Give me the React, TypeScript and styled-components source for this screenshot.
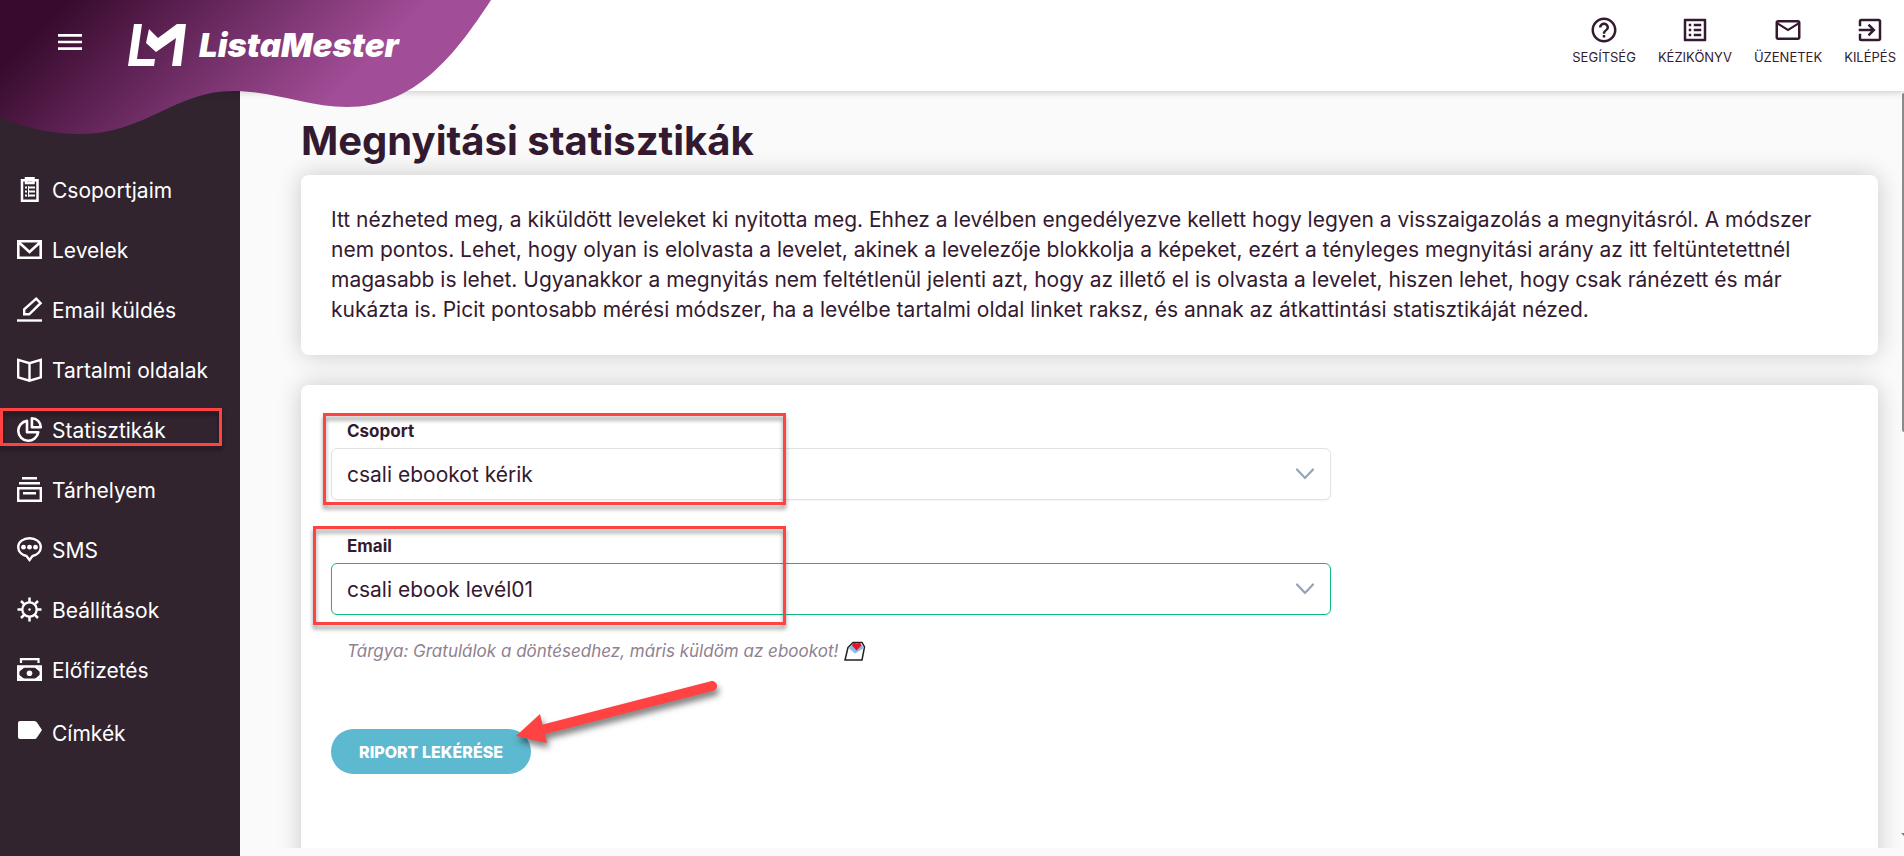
import React from "react";
import styled, { createGlobalStyle } from "styled-components";
import { MdHelpOutline, MdOutlineListAlt, MdMailOutline, MdExitToApp, MdMenu } from "react-icons/md";

const GlobalStyle = createGlobalStyle`
  *, *::before, *::after { box-sizing: border-box; }
  body {
    margin: 0;
    background: #fafafa;
    color: #341a30;
    font-family: Inter, "Open Sans", sans-serif;
    font-size: 21px;
    overflow: hidden;
  }
`;

const Page = styled.div`
  position: relative;
  display: flex;
  flex-direction: column;
  height: 100vh;
`;

const Header = styled.header`
  position: relative;
  z-index: 1;
  display: flex;
  justify-content: space-between;
  flex: 0 0 91px;
  background: #fff;
  box-shadow: 0 0 8px rgba(0, 0, 0, 0.25);
`;

const Wave = styled.svg`
  position: absolute;
  left: 0;
  top: 0;
`;

const Brand = styled.div`
  position: relative;
  display: flex;
  align-items: center;
  height: 84px;
  padding-left: 54px;
`;

const MenuButton = styled.button`
  display: flex;
  padding: 0;
  border: 0;
  background: none;
  color: #fff;
  font-size: 32px;
`;

const LogoLink = styled.a`
  display: flex;
  align-items: center;
  gap: 12px;
  margin-left: 42px;
  padding-top: 6px;
  color: #fff;
  font-size: 33px;
  font-weight: 900;
  font-style: italic;
  line-height: 42px;
  text-decoration: none;
`;

const TopNav = styled.nav`
  display: flex;
  align-items: flex-start;
  gap: 22px;
  padding: 15px 8px 0 0;
`;

const TopLink = styled.a`
  display: flex;
  flex-direction: column;
  align-items: center;
  color: #341a30;
  font-size: 13px;
  line-height: 24px;
  text-decoration: none;
  svg { font-size: 30px; }
`;

const Body = styled.div`
  display: flex;
  flex: 1;
  min-height: 0;
`;

const Sidebar = styled.nav`
  flex: 0 0 240px;
  padding-top: 69px;
  background: #31242f;
`;

const SideLink = styled.a<{ $tall?: boolean }>`
  position: relative;
  display: flex;
  align-items: center;
  gap: 9px;
  height: ${(p) => (p.$tall ? 66 : 60)}px;
  padding-left: 17px;
  color: #fff;
  text-decoration: none;
`;

const Main = styled.main`
  flex: 1;
  display: flex;
  flex-direction: column;
  min-width: 0;
  margin-bottom: 8px;
  padding: 24px 26px 0 61px;
  overflow: hidden;
`;

const Title = styled.h1`
  margin: 0 0 8px;
  font-size: 40px;
  font-weight: 700;
  line-height: 52px;
`;

const Card = styled.section<{ $grow?: boolean }>`
  position: relative;
  padding: 30px;
  border-radius: 8px;
  background: #fff;
  box-shadow: 0 0 24px rgba(0, 0, 0, 0.2);
  ${(p) => p.$grow && "flex: 1 0 500px; margin-top: 30px;"}
`;

const Intro = styled.p`
  margin: 0;
  line-height: 30px;
`;

const Form = styled.form`
  display: flex;
  flex-direction: column;
  align-items: flex-start;
`;

const Field = styled.div`
  position: relative;
  width: 100%;
  max-width: 1000px;
  & + & { margin-top: 30px; }
`;

const Label = styled.label`
  display: block;
  padding-left: 16px;
  font-size: 17px;
  font-weight: 700;
  line-height: 33px;
`;

const SelectWrap = styled.div`
  position: relative;
  display: flex;
  svg {
    position: absolute;
    right: 17px;
    top: 20px;
    pointer-events: none;
  }
`;

const Select = styled.select<{ $active?: boolean }>`
  width: 100%;
  height: 52px;
  padding: 0 48px 0 15px;
  border: 1px solid ${(p) => (p.$active ? "#10b981" : "#e2e2e2")};
  border-radius: 6px;
  appearance: none;
  background: #fff;
  color: #341a30;
  font: inherit;
  box-shadow: 0 1px 2px rgba(0, 0, 0, 0.05);
`;

const Hint = styled.p`
  display: flex;
  align-items: center;
  gap: 6px;
  margin: 24px 0 0;
  padding-left: 16px;
  color: #8f8190;
  font-size: 17px;
  font-style: italic;
  line-height: 24px;
`;

const SubmitRow = styled.div`
  position: relative;
  margin-top: 66px;
`;

const Submit = styled.button`
  width: 200px;
  height: 45px;
  padding: 0;
  border: 0;
  border-radius: 23px;
  background: #5db9cf;
  color: #fff;
  font-family: inherit;
  font-size: 16px;
  font-weight: 800;
`;

/* Red annotation frame laid over a part of the page */
const Mark = styled.span<{ $left: number; $top: number; $width: number; $height: number }>`
  position: absolute;
  left: ${(p) => p.$left}px;
  top: ${(p) => p.$top}px;
  width: ${(p) => p.$width}px;
  height: ${(p) => p.$height}px;
  border: 3px solid #ff4242;
  filter: drop-shadow(0 4px 2px rgba(0, 0, 0, 0.4));
  pointer-events: none;
`;

const Arrow = styled.svg`
  position: absolute;
  left: 180px;
  top: -52px;
  overflow: visible;
  filter: drop-shadow(2px 5px 3px rgba(0, 0, 0, 0.5));
  pointer-events: none;
`;

const ScrollThumb = styled.div`
  position: absolute;
  right: 0;
  top: 93px;
  width: 2px;
  height: 339px;
  border-radius: 2px 0 0 2px;
  background: #8b8b8b;
`;

const ScrollArrow = styled.svg`
  position: absolute;
  right: 0;
  bottom: 20px;
`;

const icons: Record<string, React.ReactNode> = {
  clipboard: (
    <>
      <path d="M5 3.2H20.500V23.800H5Z M9 1.2H16.500V6H9Z" strokeWidth="2.500" />
      <path d="M8 10.500h2M12 10.500h6M8 14.500h2M12 14.500h6M8 18.500h2M12 18.500h6" strokeWidth="1.800" />
      <path d="M11.500 9v11" strokeWidth="1" />
    </>
  ),
  mail: <path d="M1.3 4.3H23.700V20.700H1.3Z M1.500 5L12.500 15L23.500 5" strokeWidth="2.600" />,
  pen: (
    <>
      <path d="M7.2 17.3V12.400L19.2 1.700L23.600 6.2L12.2 17.3Z" strokeWidth="2.400" />
      <path d="M0 23.500H25" strokeWidth="2.400" />
    </>
  ),
  book: <path d="M1.2 2.800L12.500 6.2L23.800 2.800V20.400L12.500 23.700L1.2 20.400Z M12.500 6.2V23.500" strokeWidth="2.400" />,
  pie: (
    <>
      <path d="M10 3.900A10 10 0 1 0 21.2 15.2H10Z" strokeWidth="2.600" strokeLinejoin="round" />
      <path d="M14.900 1.3V10.2H23.800A9 9 0 0 0 14.900 1.3Z" strokeWidth="2.600" strokeLinejoin="round" />
    </>
  ),
  archive: <path d="M5 1.2H20M2 6.2H23M1.2 11.3H23.800V23.800H1.2Z M6 16.2H19" strokeWidth="2.400" />,
  chat: (
    <>
      <path
        d="M12.500 1.2C18.500 1.2 23.800 4.800 23.800 10C23.800 14.800 20 18 15.500 19L12.500 23L9.500 19C5 18 1.2 14.800 1.2 10C1.2 4.800 6.500 1.2 12.500 1.2Z"
        strokeWidth="2.400"
      />
      <g fill="#fff" stroke="none">
        <circle cx="6.500" cy="10.2" r="2.400" />
        <circle cx="12.500" cy="10.2" r="2.400" />
        <circle cx="18.500" cy="10.2" r="2.400" />
      </g>
    </>
  ),
  gear: (
    <>
      <circle cx="12.500" cy="12.500" r="7.2" strokeWidth="2.3" />
      <circle cx="12.500" cy="12.500" r="1.2" fill="#fff" stroke="none" />
      <path
        d="M12.500 0.500V5M12.500 20V24.500M0.500 12.500H5M20 12.500H24.500M4 4L7 7M18 18L21 21M21 4L18 7M7 18L4 21"
        strokeWidth="2.500"
      />
    </>
  ),
  money: (
    <>
      <path d="M4 6V2.2H21.500V6" strokeWidth="2.2" />
      <path d="M1.2 9.500H23.800V22.800H1.2Z" strokeWidth="2.400" />
      <path d="M1 14L6.500 9.500M1 18.500L6.500 23M24 14L18.500 9.500M24 18.500L18.500 23" strokeWidth="2.600" />
      <circle cx="12.500" cy="16.2" r="2.800" fill="#fff" stroke="none" />
    </>
  ),
  tag: (
    <path
      d="M3 1H17.500Q19 1 20 2.500L25 10L20 17.500Q19 19 17.500 19H3Q1 19 1 17V3Q1 1 3 1Z"
      fill="#fff"
      stroke="none"
    />
  ),
};

const SideIcon = ({ name }: { name: string }) => (
  <svg width="26" height="26" viewBox="0 0 26 26" fill="none" stroke="#fff" aria-hidden="true">
    {icons[name]}
  </svg>
);

const menu = [
  { icon: "clipboard", label: "Csoportjaim" },
  { icon: "mail", label: "Levelek" },
  { icon: "pen", label: "Email küldés" },
  { icon: "book", label: "Tartalmi oldalak" },
  { icon: "pie", label: "Statisztikák", marked: true },
  { icon: "archive", label: "Tárhelyem" },
  { icon: "chat", label: "SMS" },
  { icon: "gear", label: "Beállítások" },
  { icon: "money", label: "Előfizetés" },
  { icon: "tag", label: "Címkék", tall: true },
];

const topLinks = [
  { Icon: MdHelpOutline, label: "SEGÍTSÉG" },
  { Icon: MdOutlineListAlt, label: "KÉZIKÖNYV" },
  { Icon: MdMailOutline, label: "ÜZENETEK" },
  { Icon: MdExitToApp, label: "KILÉPÉS" },
];

const Chevron = () => (
  <svg width="18" height="12" viewBox="0 0 18 12" fill="none" stroke="#94a3b8" strokeWidth="2.2" strokeLinecap="round" aria-hidden="true">
    <path d="M1 1.500L9 10L17 1.500" />
  </svg>
);

export default function App() {
  return (
    <Page>
      <GlobalStyle />
      <Header>
        <Wave width="500" height="135" viewBox="0 0 500 135" aria-hidden="true">
          <defs>
            <linearGradient id="wave" gradientUnits="userSpaceOnUse" x1="35" y1="35" x2="215" y2="215">
              <stop offset="0" stopColor="#380b2e" />
              <stop offset="1" stopColor="#a24d97" />
            </linearGradient>
          </defs>
          <path
            d="M0 0H491C455 55 415 107 347 107C307 107 275 91 233 91C175 91 145 134 80 134C45 134 15 124 0 117Z"
            fill="url(#wave)"
          />
        </Wave>
        <Brand>
          <MenuButton type="button" aria-label="Menü">
            <MdMenu />
          </MenuButton>
          <LogoLink href="#">
            <svg width="59" height="42" viewBox="0 0 59 42" fill="#fff" aria-hidden="true">
              <path d="M6 0H14L9 35H27L26 42H0Z" />
              <path d="M21 5L30 14L49 0H58L53 42H44L48 14L28 28L18 19Z" />
            </svg>
            ListaMester
          </LogoLink>
        </Brand>
        <TopNav>
          {topLinks.map(({ Icon, label }) => (
            <TopLink href="#" key={label}>
              <Icon />
              {label}
            </TopLink>
          ))}
        </TopNav>
      </Header>
      <Body>
        <Sidebar>
          {menu.map((item) => (
            <SideLink href="#" key={item.label} $tall={item.tall}>
              <SideIcon name={item.icon} />
              {item.label}
              {item.marked && <Mark $left={0} $top={8} $width={222} $height={38} />}
            </SideLink>
          ))}
        </Sidebar>
        <Main>
          <Title>Megnyitási statisztikák</Title>
          <Card>
            <Intro>
              Itt nézheted meg, a kiküldött leveleket ki nyitotta meg. Ehhez a levélben engedélyezve kellett hogy legyen
              a visszaigazolás a megnyitásról. A módszer nem pontos. Lehet, hogy olyan is elolvasta a levelet, akinek a
              levelezője blokkolja a képeket, ezért a tényleges megnyitási arány az itt feltüntetettnél magasabb is
              lehet. Ugyanakkor a megnyitás nem feltétlenül jelenti azt, hogy az illető el is olvasta a levelet, hiszen
              lehet, hogy csak ránézett és már kukázta is. Picit pontosabb mérési módszer, ha a levélbe tartalmi oldal
              linket raksz, és annak az átkattintási statisztikáját nézed.
            </Intro>
          </Card>
          <Card $grow>
            <Form>
              <Field>
                <Label htmlFor="group">Csoport</Label>
                <SelectWrap>
                  <Select id="group">
                    <option>csali ebookot kérik</option>
                  </Select>
                  <Chevron />
                </SelectWrap>
                <Mark $left={-8} $top={-2} $width={463} $height={92} />
              </Field>
              <Field>
                <Label htmlFor="email">Email</Label>
                <SelectWrap>
                  <Select id="email" $active>
                    <option>csali ebook levél01</option>
                  </Select>
                  <Chevron />
                </SelectWrap>
                <Mark $left={-18} $top={-4} $width={473} $height={99} />
              </Field>
              <Hint>
                Tárgya: Gratulálok a döntésedhez, máris küldöm az ebookot!
                <svg width="22" height="20" viewBox="0 0 22 20" aria-hidden="true">
                  <path d="M4 6.500L9 1.500H18L20.500 6L18 19H1Z" fill="#fff" stroke="#222" strokeWidth="1.500" />
                  <path d="M4.500 7L8 4H18L20 7L11 12.500Z" fill="#86bdeb" />
                  <path d="M12.500 9.500L8 4.500Q8.500 0.500 12.500 2.500Q17 0.500 17.500 4.500Z" fill="#e81224" />
                </svg>
              </Hint>
              <SubmitRow>
                <Submit type="button">RIPORT LEKÉRÉSE</Submit>
                <Arrow width="210" height="70" viewBox="0 0 210 70" aria-hidden="true">
                  <path d="M34 52L201 9" stroke="#ff4242" strokeWidth="10" strokeLinecap="round" />
                  <path d="M5 59L29 37L36 66Z" fill="#ff4242" />
                </Arrow>
              </SubmitRow>
            </Form>
          </Card>
        </Main>
      </Body>
      <ScrollThumb />
      <ScrollArrow width="3" height="3" viewBox="0 0 3 3" aria-hidden="true">
        <path d="M0 0H3V3Z" fill="#777" />
      </ScrollArrow>
    </Page>
  );
}
